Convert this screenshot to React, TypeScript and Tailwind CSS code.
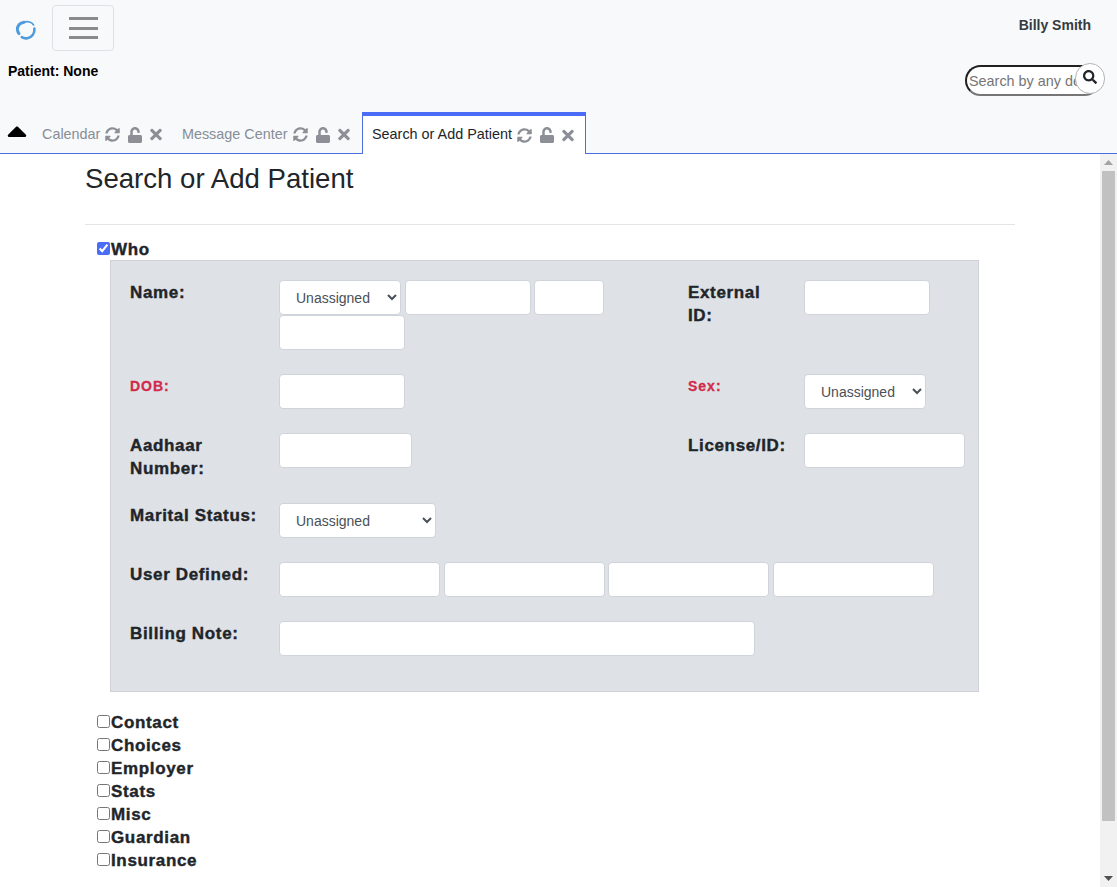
import React from 'react'
import { FaCaretUp, FaSearch, FaSyncAlt, FaTimes, FaUnlock } from 'react-icons/fa'

const font = { sans: 'font-["Liberation_Sans",Arial,sans-serif]' }

const labelClass = 'font-bold text-[17px] leading-[23px] tracking-[0.65px] text-[#212529] [-webkit-text-stroke:0.4px_#212529]'
const requiredClass = 'font-bold text-[14px] leading-[23px] tracking-[1px] text-[#d12a4a] [-webkit-text-stroke:0.3px_#d12a4a]'
const inputClass = 'h-[35px] rounded-[4px] border border-[#ced4da] bg-white block shrink-0'
const selectClass = 'h-[35px] rounded-[4px] border border-[#ced4da] bg-white text-[14px] text-[#495057] pl-[12px] shrink-0'

function Tab({ label, active, paddingRight }: { label: string; active?: boolean; paddingRight?: string }) {
  if (active) {
    return (
      <div className="h-[42px] ml-[4.5px] -mb-px flex items-center pl-[9px] pr-[11px] bg-white border-x border-[#4a6ee0] border-t-[4px] border-t-[#4a6cf7] relative">
        <span className="text-[14.4px] text-[#212529]">{label}</span>
        <TabIcons />
      </div>
    )
  }
  return (
    <div className={`h-[42px] flex items-center pl-[9px] pt-[5px] ${paddingRight || 'pr-[8px]'}`}>
      <span className="text-[14.4px] text-[#868e96]">{label}</span>
      <TabIcons />
    </div>
  )
}

function TabIcons() {
  return (
    <div className="flex items-center text-[#8c9096] ml-[5px]">
      <FaSyncAlt className="w-[15px] h-[15px]" />
      <FaUnlock className="w-[14px] h-[16px] ml-[8px]" />
      <FaTimes className="w-[12px] h-[17px] ml-[8px]" />
    </div>
  )
}

function Logo() {
  return (
    <svg width="22" height="22" viewBox="0 0 22 22" fill="none" className="shrink-0">
      <path d="M9 3.2 C4.8 3.6 2 7 2.4 11 C2.7 12.6 3.2 13.6 4 14.6" stroke="#4f9bdc" strokeWidth="3" strokeLinecap="round" />
      <path d="M9 3.2 C13 1.6 17 3.4 18.6 6" stroke="#4f9bdc" strokeWidth="1.6" strokeLinecap="round" />
      <path d="M19.4 9.5 C20 14.5 16.6 18.4 12.5 19.2 C10 19.6 8.4 19.2 6.8 18.2" stroke="#4f9bdc" strokeWidth="2.6" strokeLinecap="round" />
    </svg>
  )
}

function Row({ label, children }: { label: React.ReactNode; children: React.ReactNode }) {
  return (
    <div className="flex mb-[24px]">
      <div className="w-[149px] pr-[14px] pt-px -mb-px shrink-0">{label}</div>
      {children}
    </div>
  )
}

function Unassigned({ width }: { width: string }) {
  return (
    <select className={`${selectClass} ${width}`} defaultValue="Unassigned">
      <option>Unassigned</option>
    </select>
  )
}

function Check({ label, checked }: { label: string; checked?: boolean }) {
  return (
    <label className="flex items-center h-[23px] pl-[12px]">
      <input type="checkbox" defaultChecked={checked} className="m-0 mb-[2px] w-[13px] h-[13px] accent-[#4a6cf7]" />
      <span className={labelClass + ' ml-px'}>{label}</span>
    </label>
  )
}

export default function App() {
  return (
    <div className={`w-[1117px] h-[887px] overflow-hidden flex flex-col bg-white ${font.sans}`}>
      {/* Top bar */}
      <div className="h-[154px] shrink-0 bg-[#f8f9fb] border-b border-[#4a6ee0] flex flex-col">
        <div className="flex items-start pt-[5px] h-[58px]">
          <div className="ml-[15px] mt-[14px]"><Logo /></div>
          <button className="ml-[15px] w-[62px] h-[46px] rounded-[4px] border border-[#dfe1e4] flex flex-col items-center justify-center gap-[6.5px]">
            <span className="block w-[29px] h-[3px] bg-[#8a8a8a]" />
            <span className="block w-[29px] h-[3px] bg-[#8a8a8a]" />
            <span className="block w-[29px] h-[3px] bg-[#8a8a8a]" />
          </button>
          <div className="ml-auto mr-[26px] mt-[12px] font-bold text-[14px] leading-[17px] text-[#343a40]">Billy Smith</div>
        </div>
        <div className="flex items-start h-[53px]">
          <div className="ml-[8px] mt-[5px] font-bold text-[14px] leading-[17px] text-black">Patient: None</div>
          <div className="ml-auto mr-[17px] relative mt-[7px]">
            <input
              placeholder="Search by any demographics"
              className="w-[135px] h-[31px] rounded-full border-2 [border-style:inset] border-[#767676] bg-white pl-[2px] pr-[18px] text-[14.4px] placeholder:text-[#757575]"
            />
            <button className="absolute -right-[5px] -top-[2px] w-[30px] h-[31px] rounded-full bg-white border border-[#b5b5b8] flex items-center justify-center pb-[4px]">
              <FaSearch className="w-[14px] h-[14px] text-[#212529]" />
            </button>
          </div>
        </div>
        <div className="flex items-end h-[42px]">
          <FaCaretUp className="w-[20px] h-[32px] ml-[7px] mb-[6px] text-black" />
          <div className="ml-[6px] flex items-end">
            <Tab label="Calendar" paddingRight="pr-[10.5px]" />
            <Tab label="Message Center" />
            <Tab label="Search or Add Patient" active />
          </div>
        </div>
      </div>

      <div className="flex-1 flex min-h-0">
        <main className="flex-1 min-w-0 overflow-hidden">
          <div className="mx-auto w-[930px]">
            <h1 className="text-[27.6px] leading-[34px] pt-[8px] text-[#212529]">Search or Add Patient</h1>
            <hr className="mt-[28px] border-t border-[#e3e4e8]" />
            <div className="mt-[13px]">
              <Check label="Who" checked />
              <div className="ml-[25px] w-[869px] h-[432px] -mt-[1px] bg-[#dee2e6] border border-[#ced2d8] pt-[19px] pl-[19px]">
                <Row label={<div className={labelClass}>Name:</div>}>
                  <div className="w-[409px] shrink-0 flex flex-wrap content-start gap-x-[3.5px] h-[70px]">
                    <Unassigned width="w-[122px]" />
                    <input className={`${inputClass} w-[126px]`} />
                    <input className={`${inputClass} w-[70px]`} />
                    <input className={`${inputClass} w-[126px]`} />
                  </div>
                  <div className="w-[116px] shrink-0 pr-[20px] pt-px -mb-px"><div className={labelClass}>External ID:</div></div>
                  <input className={`${inputClass} w-[126px]`} />
                </Row>
                <Row label={<div className={requiredClass}>DOB:</div>}>
                  <div className="w-[409px] shrink-0"><input className={`${inputClass} w-[126px]`} /></div>
                  <div className="w-[116px] shrink-0 pt-px -mb-px"><div className={requiredClass}>Sex:</div></div>
                  <Unassigned width="w-[122px]" />
                </Row>
                <Row label={<div className={labelClass}>Aadhaar Number:</div>}>
                  <div className="w-[409px] shrink-0"><input className={`${inputClass} w-[133px]`} /></div>
                  <div className="w-[116px] shrink-0 pt-px -mb-px"><div className={labelClass + ' whitespace-nowrap'}>License/ID:</div></div>
                  <input className={`${inputClass} w-[161px]`} />
                </Row>
                <Row label={<div className={labelClass + ' whitespace-nowrap'}>Marital Status:</div>}>
                  <Unassigned width="w-[157px]" />
                </Row>
                <Row label={<div className={labelClass}>User Defined:</div>}>
                  <div className="flex gap-x-[3.5px]">
                    <input className={`${inputClass} w-[161px]`} />
                    <input className={`${inputClass} w-[161px]`} />
                    <input className={`${inputClass} w-[161px]`} />
                    <input className={`${inputClass} w-[161px]`} />
                  </div>
                </Row>
                <Row label={<div className={labelClass}>Billing Note:</div>}>
                  <input className={`${inputClass} w-[476px]`} />
                </Row>
              </div>
              <div className="mt-[19px]">
                <Check label="Contact" />
                <Check label="Choices" />
                <Check label="Employer" />
                <Check label="Stats" />
                <Check label="Misc" />
                <Check label="Guardian" />
                <Check label="Insurance" />
              </div>
            </div>
          </div>
        </main>

        {/* Scrollbar */}
        <div className="w-[17px] shrink-0 bg-[#f1f1f1] flex flex-col items-center">
          <div className="h-[17px] flex items-center justify-center">
            <svg width="9" height="6" viewBox="0 0 9 6"><path d="M4.5 0 L9 5 H0 Z" fill="#a3a3a3" /></svg>
          </div>
          <div className="w-[13px] h-[650px] bg-[#c1c1c1]" />
          <div className="mt-auto h-[17px] flex items-center justify-center">
            <svg width="9" height="6" viewBox="0 0 9 6"><path d="M0 0 H9 L4.5 5 Z" fill="#505050" /></svg>
          </div>
        </div>
      </div>
    </div>
  )
}
